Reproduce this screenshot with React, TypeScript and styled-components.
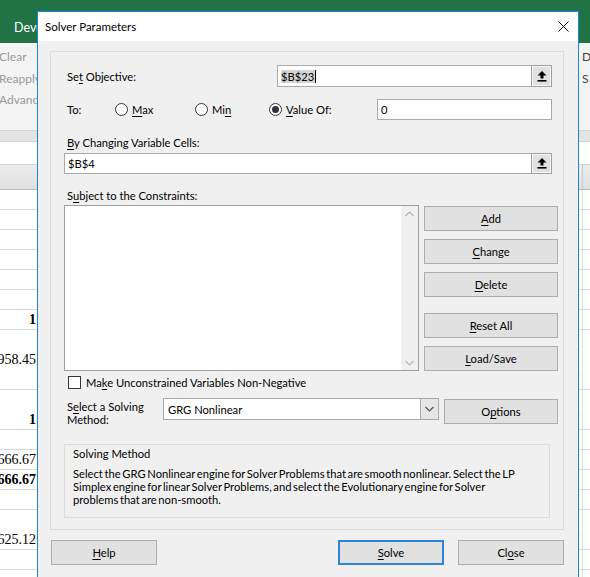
import React from "react";
import styled, { createGlobalStyle } from "styled-components";

const GlobalStyle = createGlobalStyle`
    html, body {
        margin: 0;
        padding: 0;
    }
    body {
        width: 590px;
        height: 577px;
        overflow: hidden;
        background: #ffffff;
    }
    * {
        box-sizing: border-box;
    }
`;

const UI_FONT = `Lato, "Segoe UI", "Noto Sans", sans-serif`;
const UI_SIZE = "11.2px";

const Screen = styled.div`
    position: relative;
    width: 590px;
    height: 577px;
    overflow: hidden;
    font-family: ${UI_FONT};
    background: #ffffff;
`;

/* ---------- excel behind the dialog ---------- */

const Backdrop = styled.div`
    display: flex;
    flex-direction: column;
    height: 100%;
`;

const TabBar = styled.div`
    height: 43px;
    flex-shrink: 0;
    background: #217346;
    display: flex;
    align-items: flex-end;
    padding: 0 0 6px 14px;
    color: #ffffff;
    font-size: 12.5px;
    line-height: 18px;
`;

const Ribbon = styled.div`
    height: 87px;
    flex-shrink: 0;
    background: #f3f3f3;
    display: flex;
    justify-content: space-between;
    padding-top: 3px;
`;

const RibbonColumn = styled.div<{ $edge: "left" | "right" }>`
    display: flex;
    flex-direction: column;
    font-size: 12px;
    line-height: 21.5px;
    white-space: nowrap;
    color: ${(p) => (p.$edge === "left" ? "#9a9a9a" : "#444444")};
    margin-left: ${(p) => (p.$edge === "left" ? "-1px" : "0")};
    width: ${(p) => (p.$edge === "right" ? "8px" : "auto")};
`;

const RibbonFoot = styled.div`
    height: 12px;
    flex-shrink: 0;
    background: #e4e4e4;
    border-top: 1px solid #d6d6d6;
    border-bottom: 1px solid #d0d0d0;
`;

const FormulaBar = styled.div`
    height: 23px;
    flex-shrink: 0;
    background: #ffffff;
    border-bottom: 1px solid #d4d4d4;
`;

const ColumnHeader = styled.div`
    height: 25px;
    flex-shrink: 0;
    background: linear-gradient(#ececec, #e0e0e0);
    border-bottom: 1px solid #bdbdbd;
    display: grid;
    grid-template-columns: 36px 546px 1fr;
    div + div + div {
        border-left: 1px solid #c8c8c8;
    }
`;

const SheetRow = styled.div<{ $lined: boolean }>`
    height: 20px;
    flex-shrink: 0;
    display: grid;
    grid-template-columns: 36px 546px 1fr;
    border-bottom: 1px solid ${(p) => (p.$lined ? "#d9d9d9" : "#ffffff")};
`;

const ValueCell = styled.div<{ $bold: boolean }>`
    font-family: "Liberation Serif", "Times New Roman", serif;
    font-size: 14px;
    font-weight: ${(p) => (p.$bold ? 700 : 400)};
    line-height: 20px;
    text-align: right;
    white-space: nowrap;
    overflow: hidden;
    direction: rtl;
    color: #000000;
`;

const GridCell = styled.div`
    border-left: 1px solid #d9d9d9;
`;

/* ---------- dialog ---------- */

const Window = styled.div`
    position: absolute;
    left: 37px;
    top: 11px;
    width: 542px;
    height: 580px;
    border: 1px solid #1c86d9;
    background: #f0f0f0;
    display: flex;
    flex-direction: column;
    color: #000000;
    font-size: ${UI_SIZE};
`;

const TitleBar = styled.div`
    height: 29px;
    flex-shrink: 0;
    background: #ffffff;
    display: flex;
    align-items: center;
    justify-content: space-between;
    padding-left: 7px;
    font-size: 11.5px;
`;

const CloseButton = styled.div`
    width: 30px;
    height: 29px;
    display: flex;
    align-items: center;
    justify-content: center;
`;

const Body = styled.div`
    padding: 10px 14px 0 12px;
    display: flex;
    flex-direction: column;
`;

const Panel = styled.div`
    border: 1px solid #dcdcdc;
    padding: 13px 5px 11px 13px;
    display: flex;
    flex-direction: column;
`;

const Row = styled.div<{ $top?: number; $height: number }>`
    margin-top: ${(p) => p.$top ?? 0}px;
    height: ${(p) => p.$height}px;
    display: flex;
    align-items: center;
    justify-content: space-between;
    padding-right: 6px;
`;

const Label = styled.div`
    padding-left: 3px;
    line-height: 15px;
    white-space: nowrap;
`;

const Key = styled.span`
    text-decoration: underline;
    text-underline-offset: 2px;
`;

const TextBox = styled.div<{ $width?: number }>`
    width: ${(p) => (p.$width ? `${p.$width}px` : "100%")};
    height: 100%;
    background: #ffffff;
    border: 1px solid #a9a9a9;
    display: flex;
    align-items: center;
    padding-left: 3px;
    line-height: 15px;
`;

const TextValue = styled.span`
    flex: 1;
`;

const Selected = styled.span`
    background: #d4d4d4;
    border-right: 1px solid #000000;
    padding-right: 1px;
`;

const RefButton = styled.div`
    width: 21px;
    height: calc(100% + 2px);
    margin: -1px -1px -1px 0;
    background: #e1e1e1;
    border: 1px solid #a0a0a0;
    box-shadow: inset 0 0 0 1px #f6f6f6;
    display: flex;
    align-items: center;
    justify-content: center;
`;

const RadioGrid = styled.div`
    display: grid;
    grid-template-columns: 52px 80px 74px 107px 175px;
    align-items: center;
    height: 100%;
    width: 488px;
`;

const RadioOption = styled.label`
    display: flex;
    align-items: center;
    gap: 4px;
    white-space: nowrap;
`;

const RadioDot = styled.span<{ $checked: boolean }>`
    width: 13px;
    height: 13px;
    margin-left: -1px;
    border-radius: 50%;
    border: 1px solid #333333;
    background: #ffffff;
    display: flex;
    align-items: center;
    justify-content: center;
    &::after {
        content: "";
        width: 7px;
        height: 7px;
        border-radius: 50%;
        background: #333333;
        display: ${(p) => (p.$checked ? "block" : "none")};
    }
`;

const ConstraintsRow = styled.div`
    margin-top: 2px;
    height: 166px;
    display: flex;
    gap: 5px;
`;

const ListBox = styled.div`
    width: 355px;
    height: 100%;
    background: #ffffff;
    border: 1px solid #a0a0a0;
    display: flex;
    justify-content: flex-end;
`;

const ScrollTrack = styled.div`
    width: 17px;
    background: #f0f0f0;
    display: flex;
    flex-direction: column;
    justify-content: space-between;
    align-items: center;
    padding: 5px 0 4px;
`;

const ButtonColumn = styled.div`
    width: 134px;
    padding-top: 1px;
    display: flex;
    flex-direction: column;
`;

const PushButton = styled.div<{ $width?: number; $top?: number; $focused?: boolean }>`
    width: ${(p) => (p.$width ? `${p.$width}px` : "100%")};
    height: 25px;
    margin-top: ${(p) => p.$top ?? 0}px;
    background: #e1e1e1;
    border: ${(p) => (p.$focused ? "2px solid #2b86da" : "1px solid #adadad")};
    display: flex;
    align-items: center;
    justify-content: center;
    white-space: nowrap;
    flex-shrink: 0;
`;

const CheckRow = styled.label`
    margin-top: 4px;
    height: 15px;
    display: flex;
    align-items: center;
    gap: 5px;
    padding-left: 4px;
    white-space: nowrap;
`;

const CheckBox = styled.span`
    width: 13px;
    height: 13px;
    border: 1px solid #333333;
    background: #ffffff;
`;

const MethodRow = styled.div`
    margin-top: 8px;
    height: 26px;
    display: grid;
    grid-template-columns: 99px 281px 114px;
    align-items: start;
`;

const MethodLabel = styled.div`
    padding: 3px 0 0 3px;
    line-height: 12.5px;
    white-space: nowrap;
`;

const SelectBox = styled.div`
    height: 22px;
    width: 276px;
    background: #ffffff;
    border: 1px solid #a9a9a9;
    display: flex;
    align-items: center;
    padding-left: 4px;
`;

const SelectArrow = styled.div`
    width: 19px;
    height: 22px;
    margin: -1px -1px -1px 0;
    border: 1px solid #a9a9a9;
    background: #e6e6e6;
    display: flex;
    align-items: center;
    justify-content: center;
`;

const OptionsSlot = styled.div`
    padding-top: 1px;
    display: flex;
    justify-content: flex-end;
`;

const MethodBox = styled.div`
    margin-top: 20px;
    width: 486px;
    height: 74px;
    border: 1px solid #dcdcdc;
    padding: 2px 8px 0 8px;
    line-height: 14px;
`;

const MethodText = styled.div`
    margin-top: 6px;
    line-height: 13px;
    word-spacing: -1.2px;
    white-space: nowrap;
`;

const Footer = styled.div`
    margin-top: 10px;
    padding: 0 0 0 1px;
    display: flex;
    justify-content: space-between;
`;

const FooterGroup = styled.div`
    display: flex;
    gap: 14px;
`;

const UploadIcon = () => (
    <svg width="10" height="11" viewBox="0 0 10 11">
        <path d="M5 0 L9.5 4.5 H6.5 V7.5 H3.5 V4.5 H0.5 Z" fill="#000" />
        <rect x="0.5" y="9" width="9" height="1.6" fill="#000" />
    </svg>
);

const Chevron = ({ up, color }: { up?: boolean; color: string }) => (
    <svg width="9" height="6" viewBox="0 0 9 6">
        <path
            d={up ? "M0.5 5 L4.5 1 L8.5 5" : "M0.5 1 L4.5 5 L8.5 1"}
            fill="none"
            stroke={color}
            strokeWidth="1.2"
        />
    </svg>
);

const sheetRows: { value?: string; bold?: boolean; lined: boolean }[] = [
    { lined: true },
    { lined: true },
    { lined: true },
    { lined: true },
    { lined: true },
    { lined: true },
    { value: "1", bold: true, lined: true },
    { lined: false },
    { value: "958.45", lined: false },
    { lined: true },
    { lined: false },
    { value: "1", bold: true, lined: true },
    { lined: true },
    { value: "666.67", lined: true },
    { value: "666.67", bold: true, lined: true },
    { lined: true },
    { lined: false },
    { value: "625.12", lined: true },
    { lined: true },
    { lined: true },
];

const App = () => {
    return (
        <Screen>
            <GlobalStyle />
            <Backdrop>
                <TabBar>Developer</TabBar>
                <Ribbon>
                    <RibbonColumn $edge="left">
                        <span>Clear</span>
                        <span>Reapply</span>
                        <span>Advanced</span>
                    </RibbonColumn>
                    <RibbonColumn $edge="right">
                        <span>D</span>
                        <span>S</span>
                    </RibbonColumn>
                </Ribbon>
                <RibbonFoot />
                <FormulaBar />
                <ColumnHeader>
                    <div />
                    <div />
                    <div />
                </ColumnHeader>
                {sheetRows.map((row, i) => (
                    <SheetRow key={i} $lined={row.lined}>
                        <ValueCell $bold={!!row.bold}>{row.value}</ValueCell>
                        <div />
                        <GridCell />
                    </SheetRow>
                ))}
            </Backdrop>

            <Window>
                <TitleBar>
                    <span>Solver Parameters</span>
                    <CloseButton>
                        <svg width="11" height="11" viewBox="0 0 11 11">
                            <path d="M0.5 0.5 L10.5 10.5 M10.5 0.5 L0.5 10.5" stroke="#000" strokeWidth="1" />
                        </svg>
                    </CloseButton>
                </TitleBar>
                <Body>
                    <Panel>
                        <Row $height={22}>
                            <Label>
                                Se<Key>t</Key> Objective:
                            </Label>
                            <TextBox $width={275}>
                                <TextValue>
                                    <Selected>$B$23</Selected>
                                </TextValue>
                                <RefButton>
                                    <UploadIcon />
                                </RefButton>
                            </TextBox>
                        </Row>

                        <Row $top={12} $height={21}>
                            <RadioGrid>
                                <Label>To:</Label>
                                <RadioOption>
                                    <RadioDot $checked={false} />
                                    <span>
                                        <Key>M</Key>ax
                                    </span>
                                </RadioOption>
                                <RadioOption>
                                    <RadioDot $checked={false} />
                                    <span>
                                        Mi<Key>n</Key>
                                    </span>
                                </RadioOption>
                                <RadioOption>
                                    <RadioDot $checked={true} />
                                    <span>
                                        <Key>V</Key>alue Of:
                                    </span>
                                </RadioOption>
                                <TextBox>0</TextBox>
                            </RadioGrid>
                        </Row>

                        <Row $top={15} $height={15}>
                            <Label>
                                <Key>B</Key>y Changing Variable Cells:
                            </Label>
                        </Row>
                        <Row $top={3} $height={21}>
                            <TextBox>
                                <TextValue>$B$4</TextValue>
                                <RefButton>
                                    <UploadIcon />
                                </RefButton>
                            </TextBox>
                        </Row>

                        <Row $top={14} $height={15}>
                            <Label>
                                S<Key>u</Key>bject to the Constraints:
                            </Label>
                        </Row>
                        <ConstraintsRow>
                            <ListBox>
                                <ScrollTrack>
                                    <Chevron up color="#b4b4b4" />
                                    <Chevron color="#b4b4b4" />
                                </ScrollTrack>
                            </ListBox>
                            <ButtonColumn>
                                <PushButton>
                                    <span>
                                        <Key>A</Key>dd
                                    </span>
                                </PushButton>
                                <PushButton $top={8}>
                                    <span>
                                        <Key>C</Key>hange
                                    </span>
                                </PushButton>
                                <PushButton $top={8}>
                                    <span>
                                        <Key>D</Key>elete
                                    </span>
                                </PushButton>
                                <PushButton $top={16}>
                                    <span>
                                        <Key>R</Key>eset All
                                    </span>
                                </PushButton>
                                <PushButton $top={8}>
                                    <span>
                                        <Key>L</Key>oad/Save
                                    </span>
                                </PushButton>
                            </ButtonColumn>
                        </ConstraintsRow>

                        <CheckRow>
                            <CheckBox />
                            <span>
                                Ma<Key>k</Key>e Unconstrained Variables Non-Negative
                            </span>
                        </CheckRow>

                        <MethodRow>
                            <MethodLabel>
                                S<Key>e</Key>lect a Solving
                                <br />
                                Method:
                            </MethodLabel>
                            <SelectBox>
                                <TextValue>GRG Nonlinear</TextValue>
                                <SelectArrow>
                                    <Chevron color="#555555" />
                                </SelectArrow>
                            </SelectBox>
                            <OptionsSlot>
                                <PushButton $width={114}>
                                    <span>
                                        O<Key>p</Key>tions
                                    </span>
                                </PushButton>
                            </OptionsSlot>
                        </MethodRow>

                        <MethodBox>
                            <div>Solving Method</div>
                            <MethodText>
                                Select the GRG Nonlinear engine for Solver Problems that are smooth nonlinear. Select the LP
                                <br />
                                Simplex engine for linear Solver Problems, and select the Evolutionary engine for Solver
                                <br />
                                problems that are non-smooth.
                            </MethodText>
                        </MethodBox>
                    </Panel>

                    <Footer>
                        <PushButton $width={106}>
                            <span>
                                <Key>H</Key>elp
                            </span>
                        </PushButton>
                        <FooterGroup>
                            <PushButton $width={106} $focused>
                                <span>
                                    <Key>S</Key>olve
                                </span>
                            </PushButton>
                            <PushButton $width={106}>
                                <span>
                                    Cl<Key>o</Key>se
                                </span>
                            </PushButton>
                        </FooterGroup>
                    </Footer>
                </Body>
            </Window>
        </Screen>
    );
};

export default App;
